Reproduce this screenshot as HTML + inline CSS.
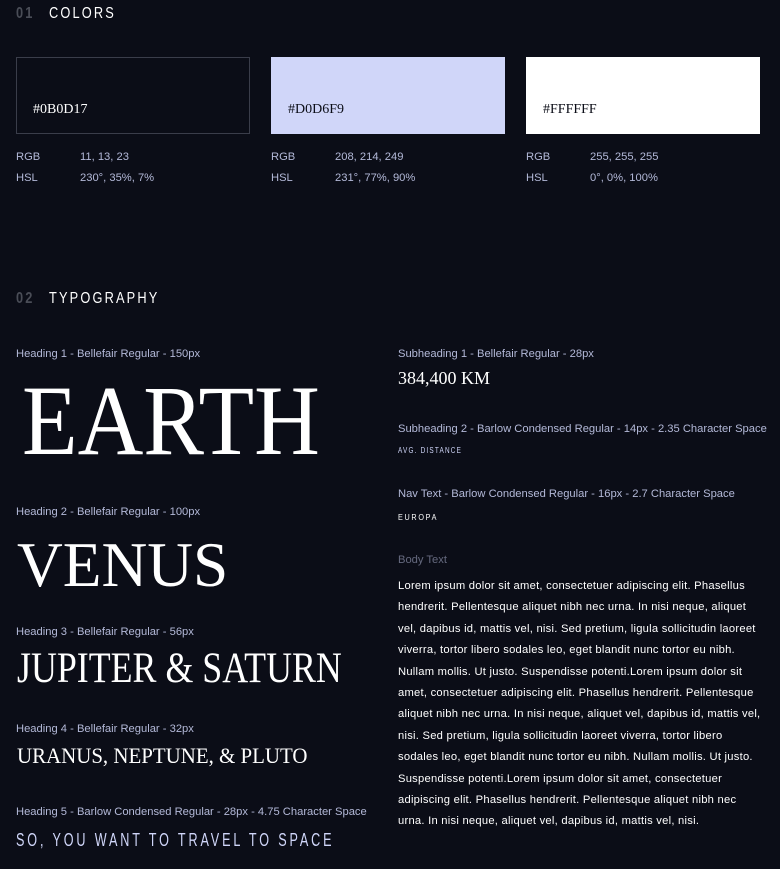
<!DOCTYPE html>
<html><head><meta charset="utf-8"><style>
body{margin:0;width:780px;height:869px;background:#0B0D17;color:#fff;overflow:hidden;position:relative;font-family:"Liberation Sans",sans-serif}
.a{position:absolute;white-space:nowrap}
.lbl{font-size:11.2px;color:#D0D6F9;opacity:.85}
.sec{font-size:16px;letter-spacing:2.7px;color:#fff;transform:scaleX(.8);transform-origin:0 0}
.sec b{color:#4a4d57;margin-right:18px;font-weight:bold}
.sw{position:absolute;top:57px;width:234px;height:77px;box-sizing:border-box}
.hex{position:absolute;left:16px;top:44px;font-family:"Liberation Serif",serif;font-size:14px}
.serif{font-family:"Liberation Serif",serif;transform-origin:0 0}
.cond{transform-origin:0 0}
.body{font-size:11.2px;letter-spacing:.25px;line-height:21.4px;color:#fff}
</style></head><body>
<div class="a sec" style="left:16px;top:5px"><b>01</b>COLORS</div>
<div class="sw" style="left:16px;border:1px solid #3a3d4a"><span class="hex" style="color:#fff">#0B0D17</span></div>
<div class="sw" style="left:271px;background:#D0D6F9"><span class="hex" style="color:#0B0D17;left:17px;top:45px">#D0D6F9</span></div>
<div class="sw" style="left:526px;background:#fff"><span class="hex" style="color:#0B0D17;left:17px;top:45px">#FFFFFF</span></div>
<div class="a lbl" style="left:16px;top:151px">RGB</div><div class="a lbl" style="left:80px;top:151px">11, 13, 23</div>
<div class="a lbl" style="left:16px;top:172px">HSL</div><div class="a lbl" style="left:80px;top:172px">230°, 35%, 7%</div>
<div class="a lbl" style="left:271px;top:151px">RGB</div><div class="a lbl" style="left:335px;top:151px">208, 214, 249</div>
<div class="a lbl" style="left:271px;top:172px">HSL</div><div class="a lbl" style="left:335px;top:172px">231°, 77%, 90%</div>
<div class="a lbl" style="left:526px;top:151px">RGB</div><div class="a lbl" style="left:590px;top:151px">255, 255, 255</div>
<div class="a lbl" style="left:526px;top:172px">HSL</div><div class="a lbl" style="left:590px;top:172px">0°, 0%, 100%</div>

<div class="a sec" style="left:16px;top:290px"><b>02</b>TYPOGRAPHY</div>

<div class="a lbl" style="left:16px;top:348px">Heading 1 - Bellefair Regular - 150px</div>
<div class="a serif" style="left:22px;top:368px;font-size:100px;line-height:105px;transform:scaleX(.91)">EARTH</div>
<div class="a lbl" style="left:16px;top:506px">Heading 2 - Bellefair Regular - 100px</div>
<div class="a serif" style="left:17px;top:531px;font-size:64px;line-height:68px;transform:scaleX(.99)">VENUS</div>
<div class="a lbl" style="left:16px;top:626px">Heading 3 - Bellefair Regular - 56px</div>
<div class="a serif" style="left:17px;top:646px;font-size:43px;line-height:46px;transform:scaleX(.834)">JUPITER &amp; SATURN</div>
<div class="a lbl" style="left:16px;top:723px">Heading 4 - Bellefair Regular - 32px</div>
<div class="a serif" style="left:17px;top:743px;font-size:22px;line-height:26px;transform:scaleX(.95)">URANUS, NEPTUNE, &amp; PLUTO</div>
<div class="a lbl" style="left:16px;top:806px">Heading 5 - Barlow Condensed Regular - 28px - 4.75 Character Space</div>
<div class="a cond" style="left:16px;top:830px;font-size:18px;letter-spacing:4.1px;color:#D0D6F9;transform:scaleX(.7)">SO, YOU WANT TO TRAVEL TO SPACE</div>

<div class="a lbl" style="left:398px;top:348px">Subheading 1 - Bellefair Regular - 28px</div>
<div class="a serif" style="left:398px;top:368px;font-size:18px">384,400 KM</div>
<div class="a lbl" style="left:398px;top:423px">Subheading 2 - Barlow Condensed Regular - 14px - 2.35 Character Space</div>
<div class="a cond" style="left:398px;top:446px;font-size:8px;letter-spacing:1.5px;color:#D0D6F9;transform:scaleX(.8)">AVG. DISTANCE</div>
<div class="a lbl" style="left:398px;top:488px">Nav Text - Barlow Condensed Regular - 16px - 2.7 Character Space</div>
<div class="a cond" style="left:398px;top:512px;font-size:8.5px;letter-spacing:2px;color:#fff;transform:scaleX(.85)">EUROPA</div>
<div class="a lbl" style="left:398px;top:554px;opacity:.45">Body Text</div>
<div class="a body" style="left:398px;top:576px">Lorem ipsum dolor sit amet, consectetuer adipiscing elit. Phasellus<br>hendrerit. Pellentesque aliquet nibh nec urna. In nisi neque, aliquet<br>vel, dapibus id, mattis vel, nisi. Sed pretium, ligula sollicitudin laoreet<br>viverra, tortor libero sodales leo, eget blandit nunc tortor eu nibh.<br>Nullam mollis. Ut justo. Suspendisse potenti.Lorem ipsum dolor sit<br>amet, consectetuer adipiscing elit. Phasellus hendrerit. Pellentesque<br>aliquet nibh nec urna. In nisi neque, aliquet vel, dapibus id, mattis vel,<br>nisi. Sed pretium, ligula sollicitudin laoreet viverra, tortor libero<br>sodales leo, eget blandit nunc tortor eu nibh. Nullam mollis. Ut justo.<br>Suspendisse potenti.Lorem ipsum dolor sit amet, consectetuer<br>adipiscing elit. Phasellus hendrerit. Pellentesque aliquet nibh nec<br>urna. In nisi neque, aliquet vel, dapibus id, mattis vel, nisi.</div>
</body></html>
